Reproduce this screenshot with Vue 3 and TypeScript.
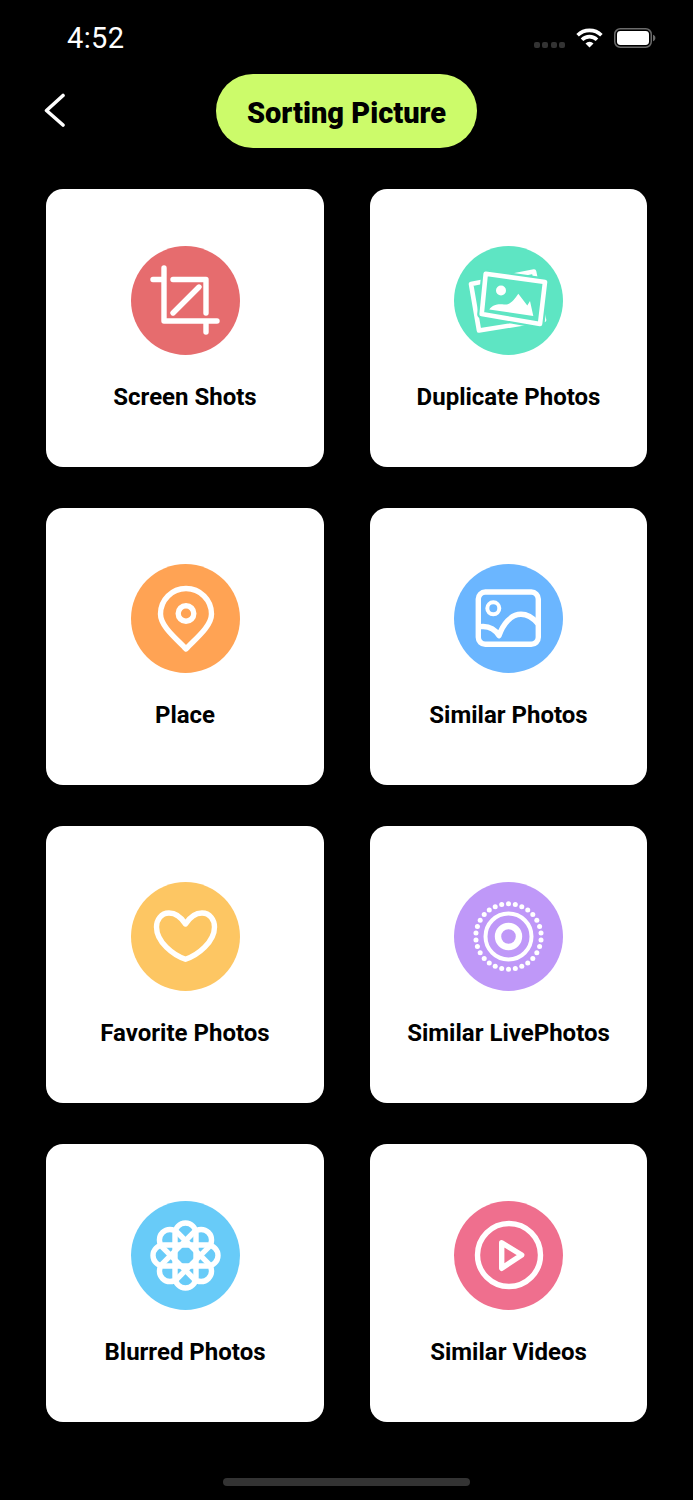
<template>
  <div class="page">
    <div class="status">
      <span class="time">4:52</span>
      <div class="status-icons">
        <div class="signal"><i v-for="n in 4" :key="n"></i></div>
        <svg class="wifi" width="27" height="20" viewBox="0 0 27 20" fill="none" stroke="#fff" stroke-width="3.6">
          <path d="M1.6 7.2a17 17 0 0 1 23.8 0" />
          <path d="M6 11.7a10.6 10.6 0 0 1 15 0" />
          <path d="M13.5 19.6 9.5 15.4a5.7 5.7 0 0 1 8 0z" fill="#fff" stroke="none" />
        </svg>
        <svg class="battery" width="42" height="20" viewBox="0 0 42 20">
          <rect x="0.75" y="0.75" width="36.5" height="18.5" rx="5.5" fill="none" stroke="#6b6b6b" stroke-width="1.5" />
          <rect x="3" y="3" width="32" height="14" rx="3.4" fill="#fff" />
          <path d="M39 6.8c1.5.4 2.4 1.6 2.4 3.2s-.9 2.8-2.4 3.2z" fill="#6b6b6b" />
        </svg>
      </div>
    </div>

    <header class="header">
      <button type="button" class="back" aria-label="Back">
        <svg width="22" height="36" viewBox="0 0 22 36" fill="none" stroke="#fff" stroke-width="3.6" stroke-linecap="round" stroke-linejoin="round">
          <path d="M19 2.5 2.5 17.5 19 32" />
        </svg>
      </button>
      <h1 class="title">Sorting Picture</h1>
    </header>

    <main class="grid">
      <div v-for="item in items" :key="item.key" class="card">
        <div class="circle" :class="item.key">
          <svg width="109" height="109" viewBox="0 0 109 109" fill="none" stroke="#fff" stroke-width="5.4" stroke-linecap="round" stroke-linejoin="round">
            <template v-if="item.key === 'crop'">
              <path d="M22 33.5H33M33 22V75H86M75 75V86M42 33.5H75V67M42 67 68 41" />
            </template>
            <template v-else-if="item.key === 'dupe'">
              <path stroke-width="4.6" d="M17 38 80 25.5 90 74 25 84.5z" />
              <path stroke="#5ee5c3" stroke-width="9" fill="#5ee5c3" d="M31.7 27.8 91 36 86 78 27.7 68z" />
              <path stroke-width="4.6" fill="#5ee5c3" d="M31.7 27.8 91 36 86 78 27.7 68z" />
              <circle cx="47" cy="44.5" r="5" fill="#fff" stroke="none" />
              <path fill="#fff" stroke="none" d="M35.3 63.5C38 59 44 57.5 50 58.5 56 59.5 60 54 64.3 47.8L73.3 59.5 76 55 79.3 70z" />
            </template>
            <template v-else-if="item.key === 'place'">
              <path d="M55 85C47 76 29.5 63 29.5 50A25.5 25.5 0 0 1 80.5 50C80.5 63 63 76 55 85Z" />
              <circle cx="55" cy="49.5" r="7.8" />
            </template>
            <template v-else-if="item.key === 'similar'">
              <rect x="24.3" y="28" width="60" height="52.3" rx="7" />
              <circle cx="39.3" cy="44.3" r="6" stroke-width="4" />
              <path d="M25.5 62.7C34 61.5 41 65 45 71.7 49 60 57 50.3 67 50.3 73 50.3 79 54 83.5 59.3" />
            </template>
            <template v-else-if="item.key === 'heart'">
              <path d="M54.5 42C50 35 44 31 38 31 30 31 25.5 38 25.5 45 25.5 60 42 73 54.5 77.3 67 73 83.5 60 83.5 45 83.5 38 79 31 71 31 65 31 59 35 54.5 42Z" />
            </template>
            <template v-else-if="item.key === 'live'">
              <circle cx="54.5" cy="54.5" r="10.5" stroke-width="6.4" />
              <circle cx="54.5" cy="54.5" r="23" stroke-width="4" />
              <circle v-for="d in dots" :key="d.x" :cx="d.x" :cy="d.y" r="2.5" fill="#fff" stroke="none" />
            </template>
            <template v-else-if="item.key === 'blur'">
              <rect v-for="a in [0, 45, 90, 135]" :key="a" x="44" y="22" width="21" height="65" rx="10.5" :transform="`rotate(${a} 54.5 54.5)`" />
            </template>
            <template v-else>
              <circle cx="55" cy="54" r="31.5" />
              <path d="M47.7 41.7 67.7 54 47.7 67.3z" />
            </template>
          </svg>
        </div>
        <span class="label">{{ item.label }}</span>
      </div>
    </main>

    <div class="home"></div>
  </div>
</template>

<script setup lang="ts">
const items = [
  { key: 'crop', label: 'Screen Shots' },
  { key: 'dupe', label: 'Duplicate Photos' },
  { key: 'place', label: 'Place' },
  { key: 'similar', label: 'Similar Photos' },
  { key: 'heart', label: 'Favorite Photos' },
  { key: 'live', label: 'Similar LivePhotos' },
  { key: 'blur', label: 'Blurred Photos' },
  { key: 'video', label: 'Similar Videos' }
]

const dots = Array.from({ length: 30 }, (_, i) => {
  const a = (i / 30) * Math.PI * 2
  return { x: 54.5 + Math.sin(a) * 32.7, y: 54.5 - Math.cos(a) * 32.7 }
})
</script>

<style scoped>
.page {
  width: 693px;
  height: 1500px;
  background: #000;
  font-family: Roboto, sans-serif;
  overflow: hidden;
}

.status {
  height: 74px;
  display: flex;
  justify-content: space-between;
  padding: 0 37px 0 67px;
  box-sizing: border-box;
}

.time {
  margin-top: 21px;
  height: 34px;
  line-height: 34px;
  color: #fff;
  font-size: 29px;
  font-weight: 400;
  letter-spacing: 0.4px;
}

.status-icons {
  display: flex;
  align-items: flex-start;
  padding-top: 28px;
}

.signal {
  display: flex;
  gap: 2.4px;
  margin: 14px 11px 0 0;
}

.signal i {
  width: 6px;
  height: 6px;
  border-radius: 2px;
  background: #333;
}

.wifi {
  margin-right: 11px;
}

.header {
  height: 74px;
  display: grid;
  grid-template-columns: 1fr auto 1fr;
  align-items: center;
  padding: 0 44px;
  margin-bottom: 41.2px;
}

.back {
  justify-self: start;
  padding: 0;
  border: none;
  background: none;
  display: flex;
}

.title {
  margin: 0;
  width: 261px;
  height: 74px;
  line-height: 78px;
  border-radius: 37px;
  background: #ccfb6a;
  color: #000;
  text-align: center;
  font-size: 29px;
  font-weight: 900;
}

.grid {
  display: grid;
  grid-template-columns: 278px 277px;
  grid-auto-rows: 277.33px;
  column-gap: 46px;
  row-gap: 41px;
  padding-left: 46px;
}

.card {
  background: #fff;
  border-radius: 17px;
  padding-top: 56.6px;
  box-sizing: border-box;
  display: flex;
  flex-direction: column;
  align-items: center;
}

.circle {
  width: 109px;
  height: 109px;
  border-radius: 50%;
  flex: none;
}

.circle svg {
  display: block;
}

.crop { background: #e66c6e; }
.dupe { background: #5ee5c3; }
.place { background: #ffa354; }
.similar { background: #6bb6ff; }
.heart { background: #fdc663; }
.live { background: #bf98f8; }
.blur { background: #68cbf8; }
.video { background: #ef6f8e; }

.label {
  margin-top: 25px;
  line-height: 34px;
  color: #000;
  font-size: 24px;
  font-weight: 700;
  white-space: nowrap;
}

.home {
  width: 247px;
  height: 8px;
  margin: 56.5px auto 0;
  border-radius: 4px;
  background: #333;
}
</style>

<style>
body {
  background: #000;
}
</style>
